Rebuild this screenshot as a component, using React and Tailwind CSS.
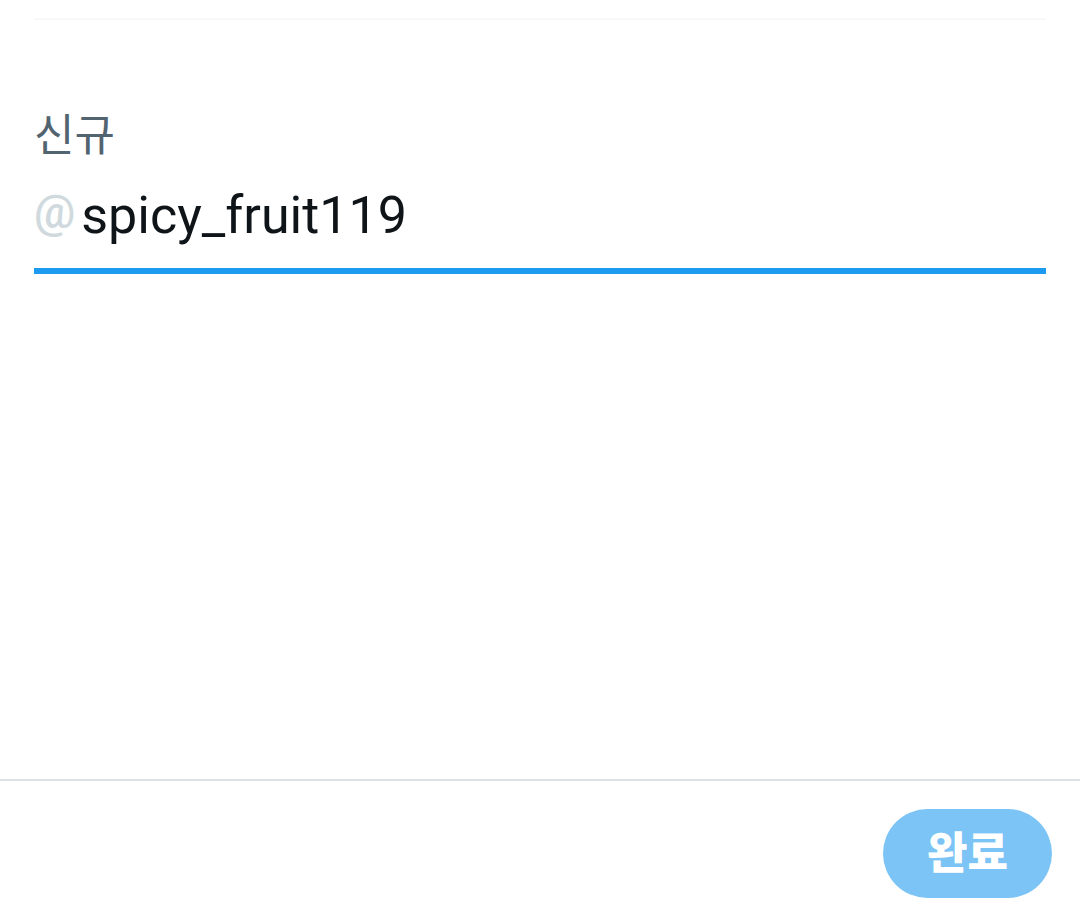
import React from "react";

export default function App() {
  return (
    <div
      className="w-[1080px] h-[923px] bg-white flex flex-col overflow-hidden"
      style={{ fontFamily: '"Roboto", "Noto Sans CJK KR", sans-serif' }}
    >
      {/* Main content */}
      <div className="flex-1 px-[34px]">
        <div className="mt-[18px] h-[2px] bg-[#f7f9f9]" />

        <div className="pt-[88px]">
          <div className="text-[44px] leading-[56px] text-[#536471]">신규</div>
          <div className="mt-[22px] flex items-end border-b-[6px] border-[#1d9bf0] pb-[22px]">
            <span className="text-[46px] leading-[52px] font-medium text-[#cfd9de] mr-[6px] mb-[8px]">@</span>
            <span className="text-[52px] leading-[60px] text-[#0f1419]">spicy_fruit119</span>
          </div>
        </div>
      </div>

      {/* Bottom bar */}
      <div className="h-[144px] border-t-2 border-[#dde2e5] flex items-start justify-end pr-[28px] pt-[28px]">
        <button className="w-[169px] h-[89px] rounded-full bg-[#7cc4f5] text-white text-[44px] font-extrabold flex items-center justify-center">
          완료
        </button>
      </div>
    </div>
  );
}
